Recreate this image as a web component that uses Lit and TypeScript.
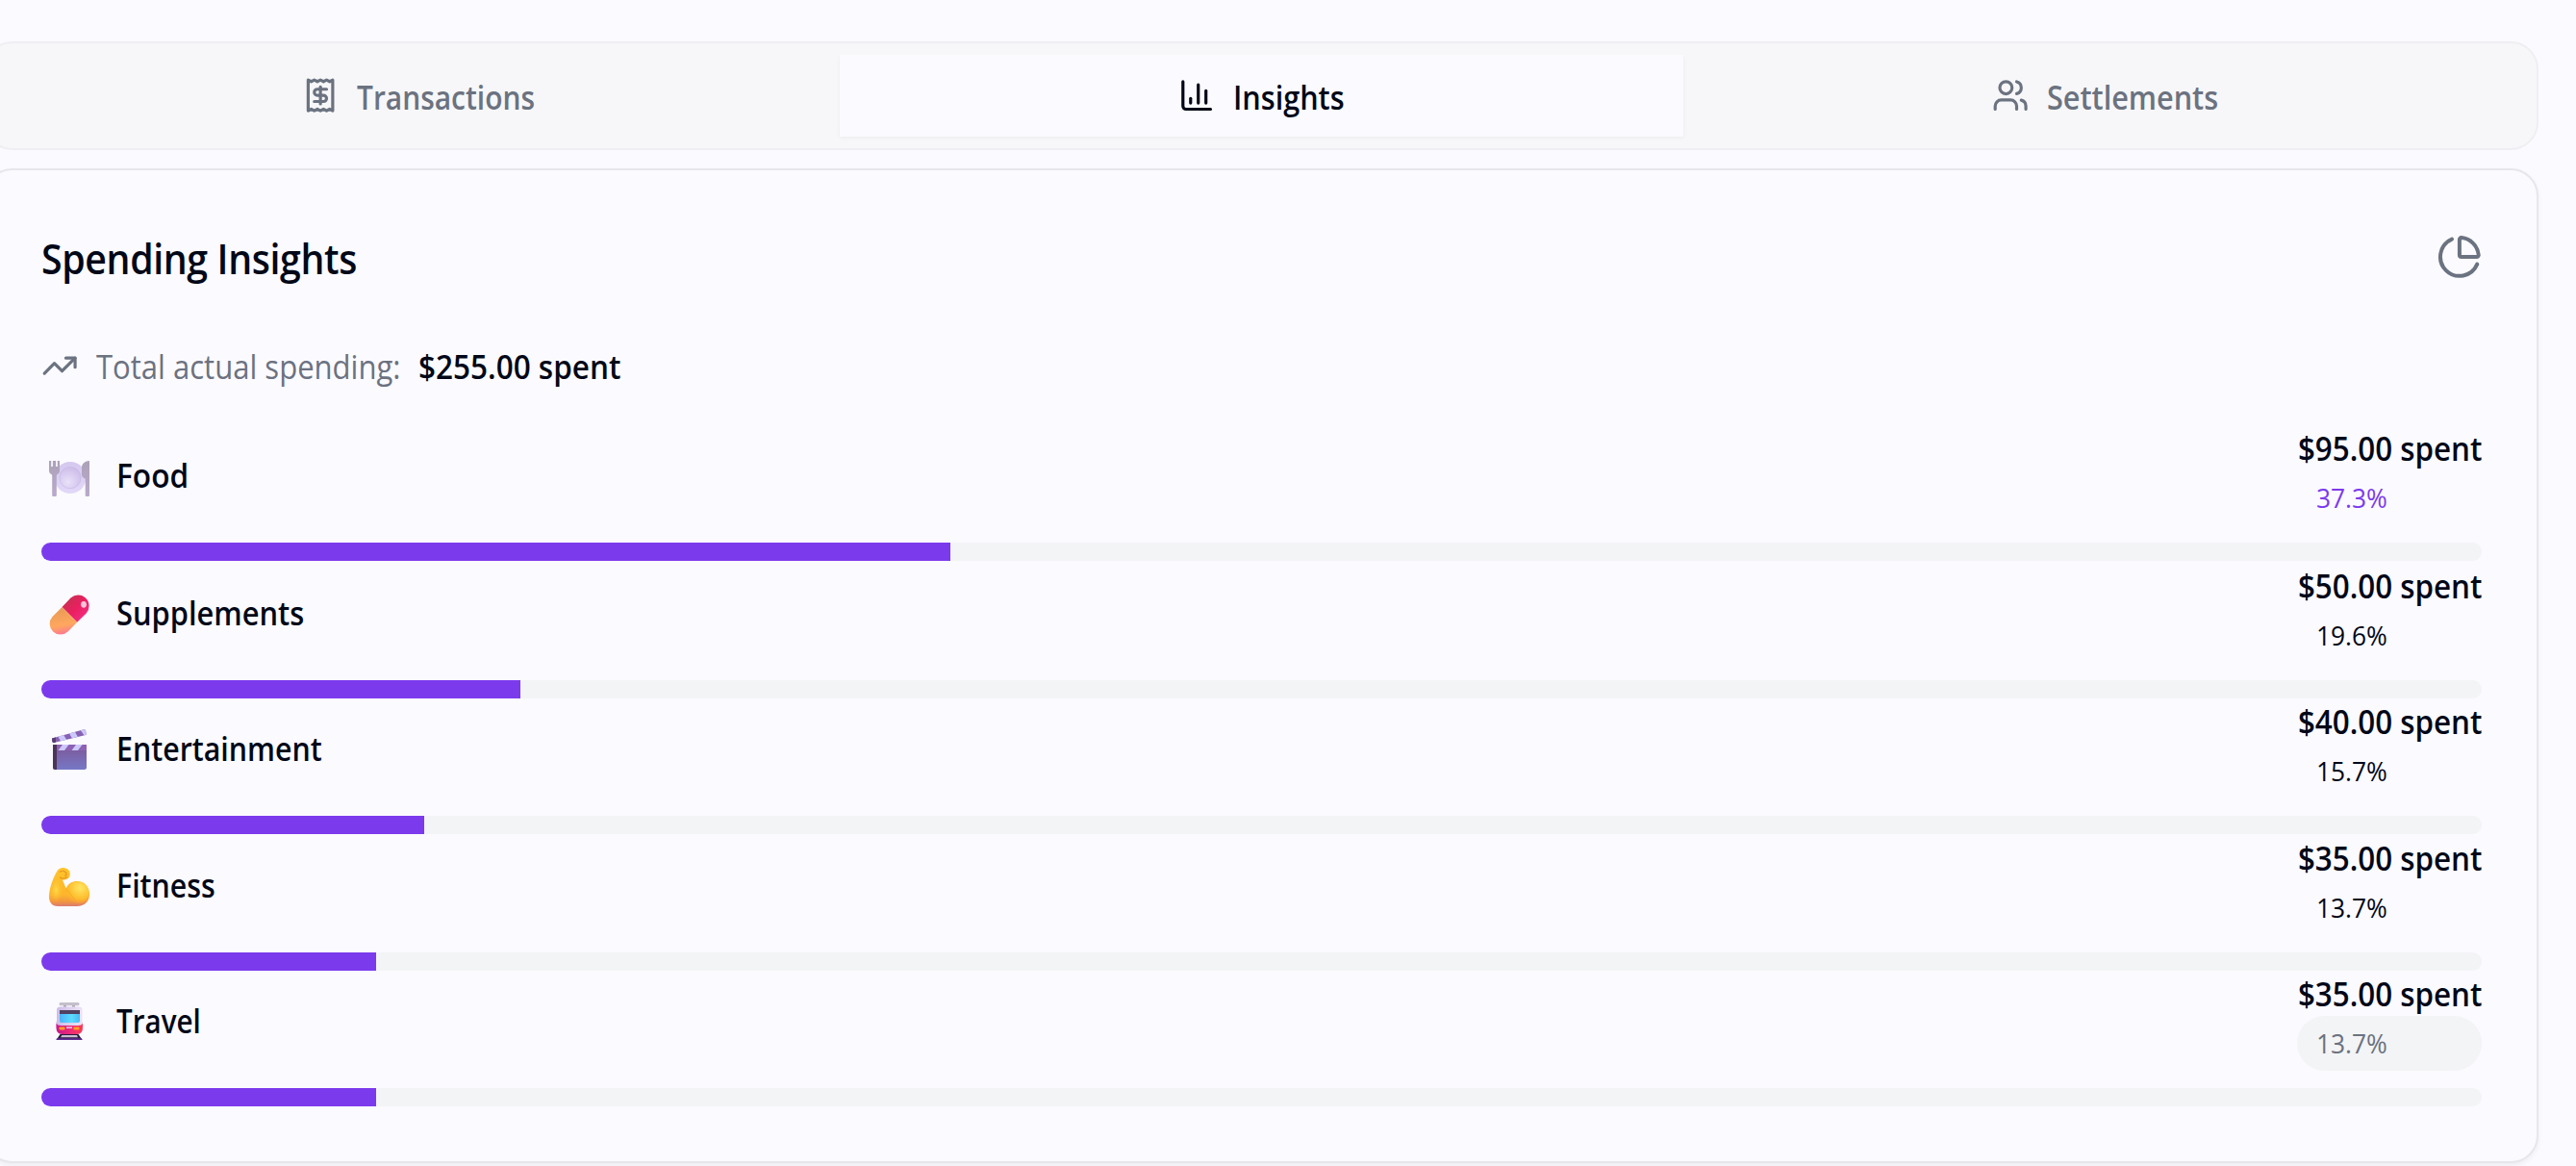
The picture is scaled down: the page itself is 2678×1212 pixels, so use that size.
import { LitElement, html, svg, css } from "lit";
import { customElement } from "lit/decorators.js";

const stroke = (body: unknown, cls = "icon") => html`<svg class=${cls} viewBox="0 0 24 24" fill="none" stroke="currentColor" stroke-width="2" stroke-linecap="round" stroke-linejoin="round">${body}</svg>`;

const receipt = svg`<path d="M4 2v20l2-1 2 1 2-1 2 1 2-1 2 1 2-1 2 1V2l-2 1-2-1-2 1-2-1-2 1-2-1-2 1Z"/><path d="M16 8h-6a2 2 0 1 0 0 4h4a2 2 0 1 1 0 4H8"/><path d="M12 17.5v-11"/>`;
const chart = svg`<path d="M3 3v16a2 2 0 0 0 2 2h16"/><path d="M18 17V9"/><path d="M13 17V5"/><path d="M8 17v-3"/>`;
const users = svg`<path d="M16 21v-2a4 4 0 0 0-4-4H6a4 4 0 0 0-4 4v2"/><circle cx="9" cy="7" r="4"/><path d="M22 21v-2a4 4 0 0 0-3-3.87"/><path d="M16 3.13a4 4 0 0 1 0 7.75"/>`;
const pie = svg`<path d="M21 12c.552 0 1.005-.449.95-.998a10 10 0 0 0-8.953-8.951c-.55-.055-.998.398-.998.95v8a1 1 0 0 0 1 1z"/><path d="M21.21 15.89A10 10 0 1 1 8 2.83"/>`;
const trend = svg`<polyline points="22 7 13.5 15.5 8.5 10.5 2 17"/><polyline points="16 7 22 7 22 13"/>`;

const plate = html`<svg class="emoji" viewBox="0 -2 42 42">
  <defs>
    <radialGradient id="pl" cx=".4" cy=".7" r=".7"><stop offset="0" stop-color="#e9e2fa"/><stop offset="1" stop-color="#cdbce9"/></radialGradient>
    <linearGradient id="rim" x1="0" y1="0" x2="0" y2="1"><stop offset="0" stop-color="#d5c8ef"/><stop offset="1" stop-color="#e2d8f8"/></linearGradient>
    <linearGradient id="cut" x1="0" y1="0" x2="0" y2="1"><stop offset="0" stop-color="#aca2b8"/><stop offset="1" stop-color="#b9a9cb"/></linearGradient>
  </defs>
  <circle cx="22" cy="19.5" r="16.5" fill="url(#rim)"/>
  <circle cx="22" cy="19.5" r="11.2" fill="url(#pl)" stroke="#c9bae6" stroke-width=".7"/>
  <path fill="url(#cut)" d="M0 2h2.2v6h1.7V2h3.2v6h1.7V2H11v10.5c0 2-1.5 3-3.2 4.200V38q0 1-1 1H4.200q-1 0-1-1V16.700C1.500 15.500 0 14.500 0 12.500Z"/>
  <path fill="url(#cut)" d="M42 2v36q0 1-1 1h-2.300q-1 0-1-1V20.500c-2-.6-3.700-2-3.700-4.500V9c0-4 3.500-7 8-7Z"/>
</svg>`;

const pill = html`<svg class="emoji" viewBox="0 .5 42 42">
  <defs>
    <linearGradient id="red" x1="0" y1="0" x2="1" y2="1"><stop offset="0" stop-color="#b8384c"/><stop offset=".5" stop-color="#ea1f5f"/><stop offset="1" stop-color="#f5348f"/></linearGradient>
    <linearGradient id="org" x1=".4" y1="0" x2=".6" y2="1"><stop offset="0" stop-color="#e89a56"/><stop offset=".65" stop-color="#ffa75f"/><stop offset="1" stop-color="#ff7396"/></linearGradient>
  </defs>
  <path fill="url(#red)" d="M13.500 13.500 22.500 4A11.400 11.400 0 0 1 38.700 20L29.200 29.300Z"/>
  <path fill="url(#org)" d="M13.500 13.500 3.500 23.400A11.220 11.220 0 0 0 19.600 39L29.200 29.300Z"/>
  <ellipse cx="36" cy="10.800" rx="2.900" ry="3.400" fill="#ffd5e7" opacity=".9"/>
</svg>`;

const clapper = html`<svg class="emoji" viewBox="0 1 42 42">
  <defs>
    <linearGradient id="brd" x1="0" y1="0" x2="0" y2="1"><stop offset="0" stop-color="#7c5796"/><stop offset="1" stop-color="#7678c6"/></linearGradient>
    <clipPath id="top"><path d="M3 9.500 36 .300Q37.500 0 38 1.500l1 4.200L5 14Q3.500 14 3.300 12.500Z"/></clipPath>
    <clipPath id="low"><path d="M4 16h35v6H4Z"/></clipPath>
  </defs>
  <g clip-path="url(#top)"><path fill="#8862b4" d="M0 0h42v16H0Z"/><path fill="#ccc8fa" d="m9 7 6-1.500 4 7-6 1.500Zm11.500-3.500 6-1.500 4 7-6 1.500ZM32 0l4-1 5 7-4 1Z"/><path fill="#56406e" d="M2 7h5v8H2Z"/></g>
  <path fill="url(#brd)" d="M4 16h35v23.500q0 2.500-2.500 2.500h-30Q4 42 4 39.500Z"/>
  <g clip-path="url(#low)"><path fill="#8d62b5" d="M4 16h35v6H4Z"/><path fill="#ccc8fa" d="M14 16h6.500L16 22H9.500Zm14 0h6.500L30 22h-6.500Z"/></g>
  <path fill="#4c3459" d="M4 16h4v26H6.500Q4 42 4 39.500Z"/>
</svg>`;

const arm = html`<svg class="emoji" viewBox="0 0 42 42">
  <defs>
    <linearGradient id="arm" x1="0" y1="0" x2="0" y2="1"><stop offset="0" stop-color="#ffc42c"/><stop offset=".7" stop-color="#fdb52d"/><stop offset=".88" stop-color="#f3963f"/><stop offset="1" stop-color="#d97a72"/></linearGradient>
    <radialGradient id="bic" cx=".62" cy=".28" r=".75"><stop offset="0" stop-color="#ffe663"/><stop offset=".65" stop-color="#ffbe2e"/><stop offset="1" stop-color="#fbab2d" stop-opacity="0"/></radialGradient>
    <radialGradient id="fore" cx=".45" cy=".5" r=".5"><stop offset="0" stop-color="#ffdb4c"/><stop offset="1" stop-color="#ffbe2c" stop-opacity="0"/></radialGradient>
  </defs>
  <path fill="url(#arm)" d="M9 3.500Q11 .5 15 1q5.500.5 6.500 4.500 1 4-1.500 6.500-2.500 2-6 1.800l3.700 8.700C20 17 24 15 29 15c8 0 13 6 13 13.500C42 36 37 41 29 41H9C3 41 0 37 0 31 0 23 4.500 10 9 3.500Z"/>
  <ellipse cx="8" cy="24" rx="7" ry="13" fill="url(#fore)"/>
  <ellipse cx="29.500" cy="27" rx="12" ry="11.500" fill="url(#bic)"/>
  <path d="M11 5.500q3-2.500 6 0t-1 4M11 11q4 2.500 8-.5" fill="none" stroke="#e8961f" stroke-width="1.200"/>
  <path d="m17.500 22.500 10 12.500" fill="none" stroke="#f3a024" stroke-width="1" opacity=".6"/>
</svg>`;

const tram = html`<svg class="emoji" viewBox="0 1 42 42">
  <defs>
    <linearGradient id="win" x1="0" y1="0" x2="1" y2="0"><stop offset="0" stop-color="#4bb2fb"/><stop offset=".6" stop-color="#5cdcff"/><stop offset="1" stop-color="#49b9f5"/></linearGradient>
    <linearGradient id="bod" x1="0" y1="0" x2="1" y2="0"><stop offset="0" stop-color="#c9188e"/><stop offset=".6" stop-color="#f02e72"/><stop offset="1" stop-color="#f93a55"/></linearGradient>
    <linearGradient id="shl" x1="0" y1="0" x2="1" y2="0"><stop offset="0" stop-color="#cdbce6"/><stop offset="1" stop-color="#ece4f7"/></linearGradient>
  </defs>
  <rect x="10.500" y="1" width="21" height="3.200" rx="1.500" fill="#c4bfca"/>
  <path d="M15 4h3v3h-3Zm9 0h3v3h-3Z" fill="#b1aabd"/>
  <path d="M8 8.500Q8 5.500 12 5.500H31q3.500 0 3.500 3V20l.5 1v6q0 7-6 7H13.500q-6 0-6-7v-6l.5-1Z" fill="url(#shl)"/>
  <path d="M7.500 22.500q1 2.500 5 2.500H30q4 0 5-2.500V27q0 7-6 7H13.500q-6 0-6-7Z" fill="url(#bod)"/>
  <path d="M11 9h21v4H11Z" fill="#504260"/>
  <path d="M11 13h21v7q0 2-2 2H13q-2 0-2-2Z" fill="url(#win)"/>
  <rect x="10.500" y="26.500" width="6" height="3" rx="1" fill="#ff9c1f"/><rect x="25.500" y="26.500" width="6" height="3" rx="1" fill="#ff9c1f"/>
  <rect x="18" y="26.300" width="6" height="1.700" fill="#e8b7e0"/>
  <path d="M11.500 34h19l4 6H7.500Z" fill="#2b1c3d"/><path d="M13.500 35h15.500l1 2.300H12Z" fill="#c9bfd6"/><path d="M8 38.200h26l.5 1.800H7.500Z" fill="#5e2c93"/>
</svg>`;

const rows = [
  { icon: plate, name: "Food", amount: "$95.00 spent", pct: 37.3, width: 37.25, tone: "primary" },
  { icon: pill, name: "Supplements", amount: "$50.00 spent", pct: 19.6, width: 19.61, tone: "plain" },
  { icon: clapper, name: "Entertainment", amount: "$40.00 spent", pct: 15.7, width: 15.69, tone: "plain" },
  { icon: arm, name: "Fitness", amount: "$35.00 spent", pct: 13.7, width: 13.73, tone: "plain" },
  { icon: tram, name: "Travel", amount: "$35.00 spent", pct: 13.7, width: 13.73, tone: "muted" },
];

@customElement("app-root")
export class AppRoot extends LitElement {
  static styles = css`
    :host { display: block; box-sizing: border-box; height: 1212px; overflow: hidden; background: #fbfaff; color: #020817; padding: 43px 39px 0 0; font-family: "Open Sans", "Noto Sans", sans-serif; font-size: 34px; font-weight: 600; line-height: 48px; white-space: nowrap; }
    * { box-sizing: border-box; }
    .icon { width: 38.25px; height: 38.25px; flex: none; display: block; }
    /* Condensed text: the box keeps the condensed width, glyphs scale from its left edge. */
    .c { display: block; flex: none; transform: scaleX(.9); transform-origin: 0 50%; }
    .tabs { display: grid; grid-template-columns: repeat(3, 1fr); height: 113px; margin-left: -16px; padding: 12px 11.25px; border: 2px solid #efeff3; border-radius: 28.700px; background: #f7f7f9; }
    .tab { display: flex; align-items: center; justify-content: center; gap: 19px; color: #6b7280; }
    .tab.active { color: #020817; background: #fbfaff; box-shadow: 0 2.400px 4.800px rgba(0, 0, 0, .05); }
    .tab .c { margin-top: 2px; }
    .t1 { width: 186px; transform: scaleX(.88); }
    .t2 { width: 116.500px; }
    .t3 { width: 176.500px; }
    .card { height: 1034px; margin: 19px 0 0 -16px; border: 2px solid #e6e6eb; border-radius: 28.700px; padding: 57px 57px 0; background: #fbfaff; box-shadow: 0 2.400px 4.800px rgba(0, 0, 0, .05); }
    .head { display: flex; justify-content: space-between; height: 67px; }
    .title { margin: 0; padding-top: 5px; font-size: 42.500px; line-height: 60px; font-weight: 600; letter-spacing: -.4px; transform: scaleX(.924); }
    .pie { width: 47.800px; height: 47.800px; margin: 9px -.5px 0 0; color: #6b7280; flex: none; }
    .total { display: flex; align-items: center; height: 48px; margin-top: 55px; color: #6b7280; }
    .total .c { margin-top: 1.500px; }
    .label { width: 316px; margin-left: 19px; font-weight: 400; transform: scaleX(.913); }
    .sum { margin-left: 19px; color: #020817; transform: scaleX(.926); }
    .list { display: flex; flex-direction: column; margin-top: 38px; }
    .line { display: flex; align-items: flex-end; justify-content: space-between; height: 122px; }
    .item:nth-child(2) .line { height: 124px; }
    .item:nth-child(4) .line { height: 123px; }
    .what { display: flex; align-items: center; height: 122px; padding: 0 0 14px 8px; }
    .emoji { width: 42px; height: 42px; display: block; overflow: visible; }
    .name { margin: 0 0 4px 27.500px; transform: scaleX(.892); }
    .item:nth-child(1) .name { transform: scaleX(.93); }
    .item:nth-child(2) .name { transform: scaleX(.907); }
    .item:nth-child(5) .name { transform: scaleX(.87); }
    .nums { width: 192px; height: 122px; }
    .amount { height: 47px; line-height: 48px; transform: scaleX(.922); padding-left: 1px; }
    .badge { height: 57px; padding-left: 20px; border-radius: 29px; font-size: 28px; line-height: 56px; font-weight: 400; }
    .pct { transform: scaleX(.94); }
    .badge.primary { color: #7c3aed; }
    .badge.muted { color: #6b7280; background: #f3f4f6; }
    .track { height: 19px; border-radius: 10px; background: #f3f4f6; overflow: hidden; }
    .fill { height: 19px; background: #7c3aed; }
  `;

  render() {
    return html`
      <nav class="tabs">
        <div class="tab">${stroke(receipt)}<span class="c t1">Transactions</span></div>
        <div class="tab active">${stroke(chart)}<span class="c t2">Insights</span></div>
        <div class="tab">${stroke(users)}<span class="c t3">Settlements</span></div>
      </nav>
      <section class="card">
        <div class="head"><h2 class="c title">Spending Insights</h2>${stroke(pie, "pie")}</div>
        <div class="total">${stroke(trend)}<span class="c label">Total actual spending:</span><span class="c sum">$255.00 spent</span></div>
        <div class="list">
          ${rows.map((r) => html`
            <div class="item">
              <div class="line">
                <div class="what">${r.icon}<span class="c name">${r.name}</span></div>
                <div class="nums"><div class="c amount">${r.amount}</div><div class="badge ${r.tone}"><span class="c pct">${r.pct}%</span></div></div>
              </div>
              <div class="track"><div class="fill" style="width:${r.width}%"></div></div>
            </div>`)}
        </div>
      </section>`;
  }
}
